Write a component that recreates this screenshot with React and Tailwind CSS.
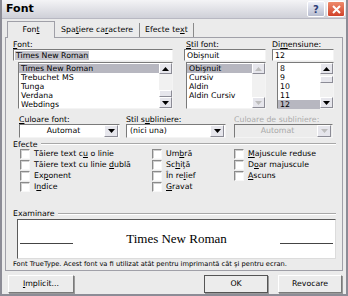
import React from "react";

const Tri = ({ dir = "down", color = "#000" }) => (
  <svg width="7" height="4" viewBox="0 0 7 4">
    <path d={dir === "down" ? "M0 0h7L3.5 4z" : "M0 4h7L3.5 0z"} fill={color} />
  </svg>
);

function ArrowBtn({ dir, disabled }) {
  return (
    <div className="h-[11px] w-[13px] flex items-center justify-center bg-[#e6e6ec] border border-t-white border-l-white border-b-[#8c8c96] border-r-[#8c8c96]">
      <Tri dir={dir} color={disabled ? "#bdbdbd" : "#000"} />
    </div>
  );
}

function ListBox({ items, sel, className, thumb, disabled }) {
  return (
    <div className={`flex bg-white border border-t-[#7a7a7a] border-l-[#7a7a7a] border-b-[#f4f4f4] border-r-[#f4f4f4] ${className}`}>
      <div className="flex-1 pt-[1px]">
        {items.map((it) => (
          <div
            key={it}
            className={`h-[9px] leading-[9px] pl-[2px] ${it === sel ? "bg-[#b7b7c0]" : ""}`}
          >
            {it}
          </div>
        ))}
      </div>
      <div className="w-[13px] flex flex-col bg-[#f1f1f1]">
        <ArrowBtn dir="up" disabled={disabled} />
        <div className="flex-1 flex flex-col">
          {thumb === "top" && <div className="h-[7px] mt-[2px] bg-[#e6e6ec] border border-t-white border-l-white border-b-[#8c8c96] border-r-[#8c8c96]" />}
          {thumb === "bottom" && <div className="h-[7px] mt-auto bg-[#e6e6ec] border border-t-white border-l-white border-b-[#8c8c96] border-r-[#8c8c96]" />}
        </div>
        <ArrowBtn dir="down" disabled={disabled} />
      </div>
    </div>
  );
}

function Select({ value, className, disabled, center }) {
  return (
    <div className={`h-[14px] flex items-center border border-t-[#7a7a7a] border-l-[#7a7a7a] border-b-[#f4f4f4] border-r-[#f4f4f4] ${disabled ? "bg-[#ececec]" : "bg-white"} ${className}`}>
      <div className={`flex-1 leading-[12px] pl-[3px] ${center ? "text-center" : ""} ${disabled ? "text-[#a8a8a8]" : ""}`}>{value}</div>
      <div className="h-[12px] w-[14px] mr-[1px] flex items-center justify-center bg-[#e6e6ec] border border-t-white border-l-white border-b-[#8c8c96] border-r-[#8c8c96]">
        <Tri color={disabled ? "#bdbdbd" : "#000"} />
      </div>
    </div>
  );
}

function Check({ children }) {
  return (
    <div className="h-[11px] flex items-center">
      <div className="w-[10px] h-[10px] bg-white border border-t-[#8a8a8a] border-l-[#8a8a8a] border-b-[#f8f8f8] border-r-[#f8f8f8] shadow-[inset_1px_1px_0_#d0d0d0]" />
      <span className="ml-[4px] leading-[9px]">{children}</span>
    </div>
  );
}

function Btn({ children, className, def }) {
  return (
    <div className={`h-[18px] flex items-center justify-center bg-[#ececec] border ${def ? "border-[#555]" : "border-t-white border-l-white border-b-[#7a7a7a] border-r-[#7a7a7a]"} shadow-[1px_1px_0_#9a9a9a] ${className}`}>
      {children}
    </div>
  );
}

const U = ({ children }) => <span className="underline underline-offset-1">{children}</span>;

export default function App() {
  return (
    <div className="w-[348px] h-[296px] overflow-hidden bg-[#ebebeb] text-black text-[7.8px] font-['DejaVu_Sans',sans-serif] border-x-2 border-b-2 border-[#8c8c96] flex flex-col">
      {/* title bar */}
      <div className="h-[19px] shrink-0 flex items-center bg-gradient-to-b from-[#f4f4f6] to-[#cfd0d8] border-b border-[#b8b8c2] pl-[4px] pr-[1px]">
        <span className="text-[11px] font-bold">Font</span>
        <div className="ml-auto flex gap-[2px]">
          <div className="w-[18px] h-[16px] rounded-[2px] border border-white bg-gradient-to-b from-[#eef0f8] to-[#b8bdd0] flex items-center justify-center text-[10px] font-bold text-[#2d3e78]">?</div>
          <div className="w-[18px] h-[16px] rounded-[2px] border border-white bg-gradient-to-b from-[#ee8a6c] to-[#d0402a] flex items-center justify-center">
            <svg width="9" height="9" viewBox="0 0 9 9">
              <path d="M1 1l7 7M8 1L1 8" stroke="#fff" strokeWidth="2" />
            </svg>
          </div>
        </div>
      </div>

      <div className="flex-1 flex flex-col px-[3px]">
        {/* tabs */}
        <div className="h-[18px] flex items-end pl-[2px] relative z-10">
          <div className="h-[17px] w-[48px] flex items-center justify-center bg-[#ebebeb] border-t border-l border-r border-[#a0a0a8] -mb-px">
            Fon<U>t</U>
          </div>
          <div className="h-[14px] flex items-center px-[6px] border-r border-[#8a8a8a]">
            Spa<U>ţ</U>iere ca<U>r</U>actere
          </div>
          <div className="h-[14px] flex items-center px-[5px] border-r border-[#8a8a8a]">
            Efecte te<U>x</U>t
          </div>
        </div>

        {/* panel */}
        <div className="h-[234px] border border-[#a0a0a8] flex flex-col pl-[7px] pr-[6px]">
          {/* row 1 */}
          <div className="flex pt-[2px]">
            <div className="w-[160px]">
              <div className="h-[9px] leading-[9px]"><U>F</U>ont:</div>
              <div className="h-[12px] bg-white border border-t-[#7a7a7a] border-l-[#7a7a7a] border-b-[#f4f4f4] border-r-[#f4f4f4] flex items-center pl-[1px]">
                <span className="bg-[#c4c4cc] leading-[9px] px-[1px]">Times New Roman</span>
              </div>
              <ListBox
                className="ml-[5px] mt-[1px] h-[47px]"
                items={["Times New Roman", "Trebuchet MS", "Tunga", "Verdana", "Webdings"]}
                sel="Times New Roman"
                thumb="bottom"
              />
            </div>
            <div className="w-[82px] ml-[11px]">
              <div className="h-[9px] leading-[9px] pl-[2px]"><U>S</U>til font:</div>
              <div className="h-[12px] bg-white border border-t-[#7a7a7a] border-l-[#7a7a7a] border-b-[#f4f4f4] border-r-[#f4f4f4] flex items-center pl-[2px] leading-[9px]">
                Obişnuit
              </div>
              <ListBox
                className="ml-[2px] mt-[1px] h-[47px]"
                items={["Obişnuit", "Cursiv", "Aldin", "Aldin Cursiv"]}
                sel="Obişnuit"
                disabled
              />
            </div>
            <div className="w-[62px] ml-[6px]">
              <div className="h-[9px] leading-[9px]">Di<U>m</U>ensiune:</div>
              <div className="h-[12px] bg-white border border-t-[#7a7a7a] border-l-[#7a7a7a] border-b-[#f4f4f4] border-r-[#f4f4f4] flex items-center pl-[2px] leading-[9px]">
                12
              </div>
              <ListBox
                className="ml-[5px] mt-[1px] h-[47px]"
                items={["8", "9", "10", "11", "12"]}
                sel="12"
                thumb="top"
              />
            </div>
          </div>

          {/* row 2 */}
          <div className="flex mt-[6px] pl-[6px]">
            <div className="w-[101px]">
              <div className="h-[9px] leading-[9px]"><U>C</U>uloare font:</div>
              <Select value="Automat" center />
            </div>
            <div className="w-[100px] ml-[6px]">
              <div className="h-[9px] leading-[9px]">Stil s<U>u</U>bliniere:</div>
              <Select value="(nici una)" />
            </div>
            <div className="w-[99px] ml-[8px]">
              <div className="h-[9px] leading-[9px] text-[#ababab]">Culoare de subliniere:</div>
              <Select value="Automat" center disabled />
            </div>
          </div>

          {/* efecte */}
          <div className="mt-[2px] h-[8px] flex items-center">
            <span className="leading-[9px] pr-[3px]">Efecte</span>
            <div className="flex-1 h-[2px] border-t border-[#a8a8a8] border-b border-b-white" />
          </div>
          <div className="flex pl-[7px]">
            <div className="w-[132px]">
              <Check>Tăiere text c<U>u</U> o linie</Check>
              <Check>Tăiere text cu linie <U>d</U>ublă</Check>
              <Check>Ex<U>p</U>onent</Check>
              <Check>I<U>n</U>dice</Check>
            </div>
            <div className="w-[82px]">
              <Check>Um<U>b</U>ră</Check>
              <Check>Sc<U>h</U>iţă</Check>
              <Check>În re<U>l</U>ief</Check>
              <Check><U>G</U>ravat</Check>
            </div>
            <div>
              <Check><U>M</U>ajuscule reduse</Check>
              <Check>D<U>o</U>ar majuscule</Check>
              <Check><U>A</U>scuns</Check>
            </div>
          </div>

          {/* examinare */}
          <div className="mt-[17px] h-[9px] flex items-center">
            <span className="leading-[9px] pr-[3px]">Examinare</span>
            <div className="flex-1 h-[2px] border-t border-[#a8a8a8] border-b border-b-white" />
          </div>
          <div className="ml-[4px] mt-[1px] h-[40px] bg-white border border-t-[#5a5a5a] border-l-[#5a5a5a] border-b-[#dcdcdc] border-r-[#dcdcdc] flex items-center px-[2px]">
            <div className="w-[53px] h-px bg-[#444] mt-[8px]" />
            <div className="flex-1 text-center font-['Liberation_Serif',serif] text-[13px] leading-[14px]">Times New Roman</div>
            <div className="w-[53px] h-px bg-[#444] mt-[8px]" />
          </div>
          <div className="mt-[1px] text-[6.7px] leading-[9px]">
            Font TrueType. Acest font va fi utilizat atât pentru imprimantă cât şi pentru ecran.
          </div>
        </div>

        {/* buttons */}
        <div className="flex items-center mt-[4px] pl-[3px] pr-[1px]">
          <Btn className="w-[66px]"><U>I</U>mplicit...</Btn>
          <Btn className="w-[64px] ml-auto" def>OK</Btn>
          <Btn className="w-[64px] ml-[10px]">Revocare</Btn>
        </div>
      </div>
    </div>
  );
}
